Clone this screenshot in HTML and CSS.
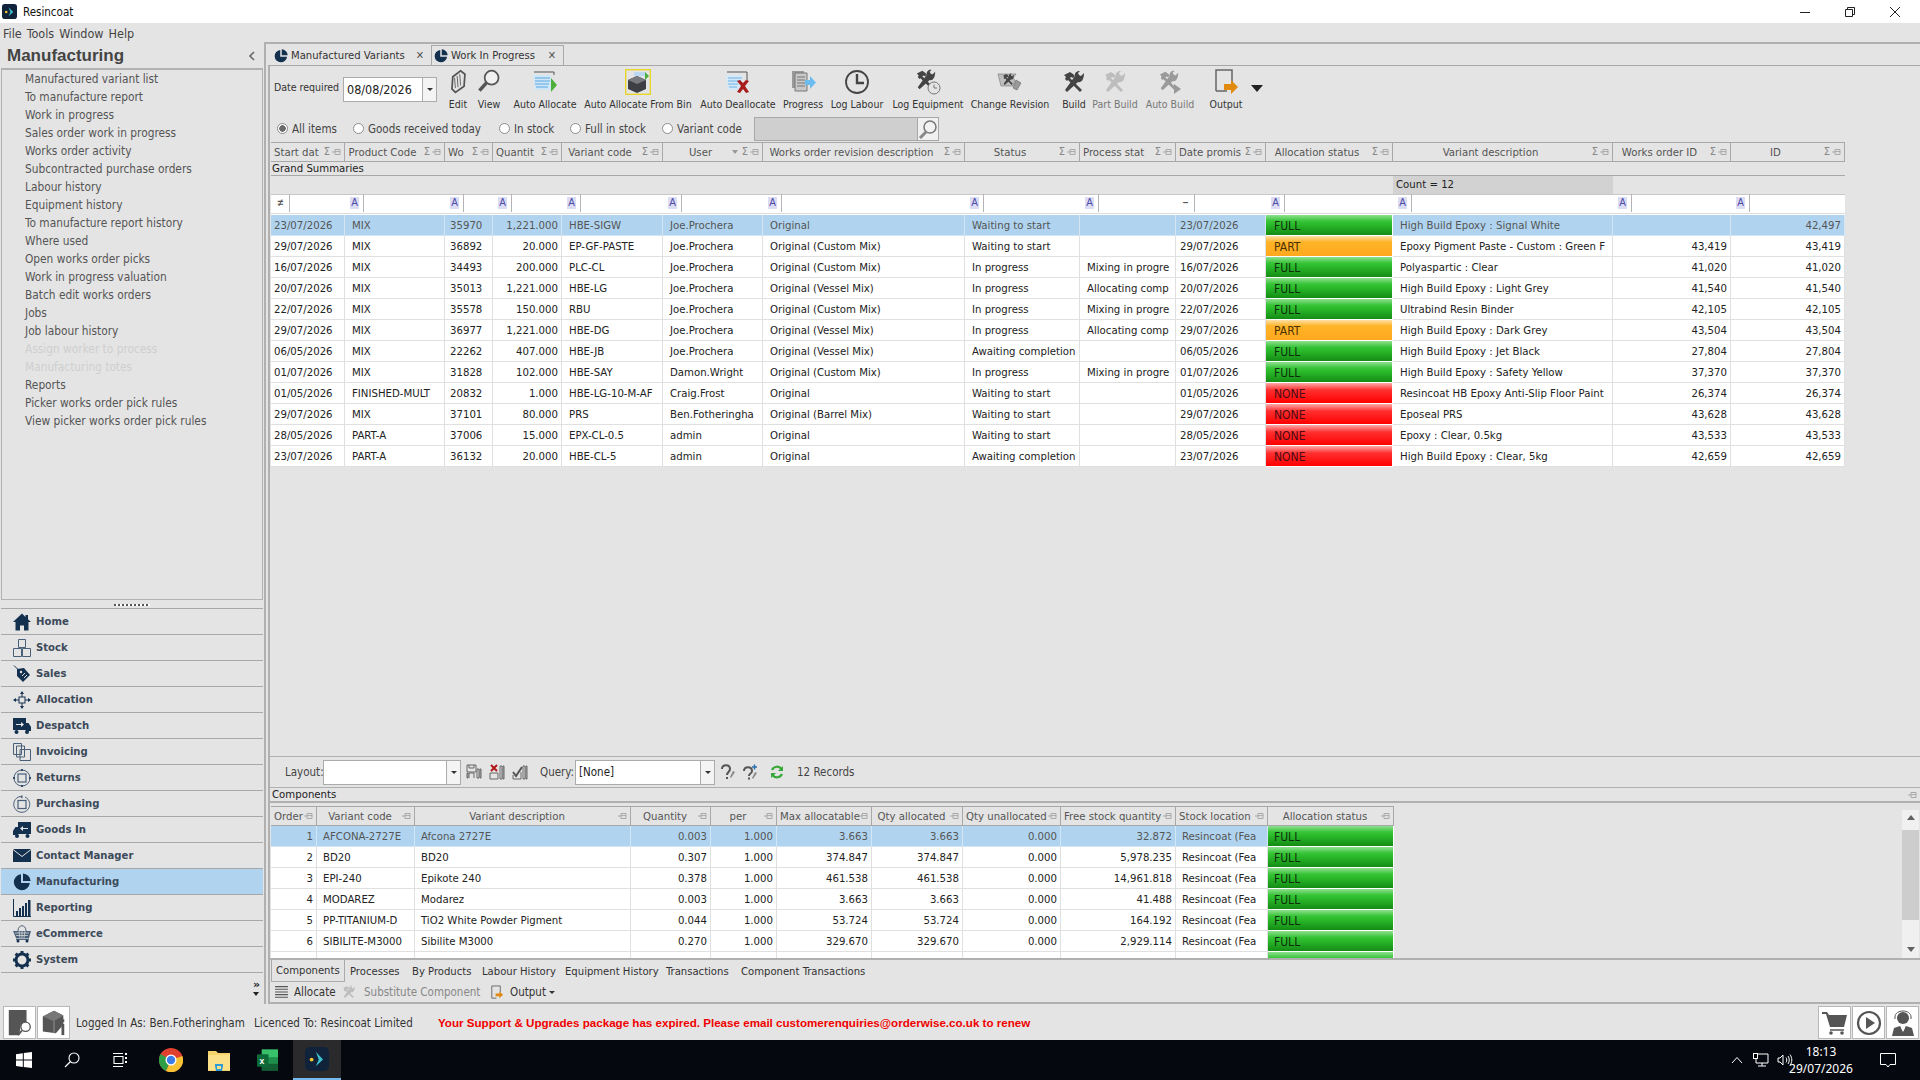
FILE: index.html
```html
<!DOCTYPE html>
<html lang="en">
<head>
<meta charset="utf-8">
<title>Resincoat</title>
<link rel="stylesheet" href="styles.css">
</head>
<body>
<svg class="defs" width="0" height="0" aria-hidden="true">
  <symbol id="pin" viewBox="0 0 10 8"><path d="M0 4h3M3 1.500h5v5H3zM3 3.600h5" fill="none" stroke="#a8a8a8" stroke-width="1"/></symbol>
  <symbol id="pie" viewBox="0 0 18 18"><path d="M8 1.200A8 8 0 1 0 16.800 10H8z" fill="#14304f"/><path d="M10 0.400A8 8 0 0 1 17.600 8H10z" fill="#14304f"/></symbol>
  <symbol id="hammers" viewBox="0 0 24 24"><path d="M2 5l6-3 3 2 2 2-2 2-2-1-1 1 12 12-2 2L6 10 5 11 3 9 4 7z" fill="currentColor"/><path d="M22 3l-3 3-2-1-1-2 2-2c-3-.5-6 2-5 5L3 20l2 2 11-10c3 1 6-2 6-9z" fill="currentColor"/></symbol>
</svg>

<header class="titlebar">
  <svg class="appicon" viewBox="0 0 16 16"><rect width="16" height="16" rx="3" fill="#10233a"/><circle cx="4.500" cy="8.500" r="1.400" fill="#f3c52c"/><path d="M7 3.500l5 5-5 4.500 2-4.500z" fill="#3fc1d0"/></svg>
  <span class="titletext">Resincoat</span>
  <div class="winctrls">
    <svg viewBox="0 0 12 12"><path d="M1 6.500h10" stroke="#222" fill="none"/></svg>
    <svg viewBox="0 0 12 12"><path d="M1.500 3.500h7v7h-7zM3.500 3.500v-2h7v7h-2" stroke="#222" fill="none"/></svg>
    <svg viewBox="0 0 12 12"><path d="M1 1l10 10M11 1L1 11" stroke="#222" fill="none"/></svg>
  </div>
</header>
<nav class="menubar"><span>File</span><span>Tools</span><span>Window</span><span>Help</span></nav>

<div class="workspace">
  <aside class="sidebar">
    <div class="sidehead"><h1>Manufacturing</h1><svg viewBox="0 0 8 10" class="collapse"><path d="M6 1L2 5l4 4" fill="none" stroke="#666" stroke-width="1.600"/></svg></div>
    <ul class="sidelist">
      <li>Manufactured variant list</li><li>To manufacture report</li><li>Work in progress</li><li>Sales order work in progress</li><li>Works order activity</li><li>Subcontracted purchase orders</li><li>Labour history</li><li>Equipment history</li><li>To manufacture report history</li><li>Where used</li><li>Open works order picks</li><li>Work in progress valuation</li><li>Batch edit works orders</li><li>Jobs</li><li>Job labour history</li><li class="off">Assign worker to process</li><li class="off">Manufacturing totes</li><li>Reports</li><li>Picker works order pick rules</li><li>View picker works order pick rules</li>
    </ul>
    <div class="grip"></div>
    <ul class="navlist">
      <li><svg viewBox="0 0 18 18"><path d="M9 .5L0 9h2.500v8.500h4.500v-5h4v5h4.500V9H18l-3-2.800V2h-2.500v2z" fill="#14304f"/></svg>Home</li>
      <li><svg viewBox="0 0 18 18"><path d="M5.500.5h7v8h-7zM.5 9.500h8v8h-8zM9.500 9.500h8v8h-8z" fill="#e4e4e4" stroke="#4a6078"/></svg>Stock</li>
      <li><svg viewBox="0 0 18 18"><path d="M1 .5l5 5" stroke="#14304f" fill="none"/><path d="M4 4l7-1 6 7-7 7-6-6z" fill="#14304f"/><circle cx="8" cy="7" r="1.200" fill="#e4e4e4"/><path d="M9 11l3-3M11 13l3-3" stroke="#e4e4e4" fill="none"/></svg>Sales</li>
      <li><svg viewBox="0 0 18 18"><path d="M9 0l2 3H7zM9 18l2-3H7zM0 9l3-2v4zM18 9l-3-2v4z" fill="#14304f"/><path d="M9 3v3M9 12v3M3 9h3M12 9h3" stroke="#14304f" fill="none"/><rect x="6" y="6" width="6" height="6" fill="#e4e4e4" stroke="#14304f"/></svg>Allocation</li>
      <li><svg viewBox="0 0 18 18"><path d="M0 1h13v12H0zM13 6h2.500l2.500 4v4h-5z" fill="#14304f"/><circle cx="3.500" cy="15" r="2" fill="#14304f"/><circle cx="14" cy="15" r="2" fill="#14304f"/><path d="M3 7h5V5l3 2.500L8 10V8H3z" fill="#e4e4e4"/></svg>Despatch</li>
      <li><svg viewBox="0 0 18 18"><path d="M.5.5h8v11h-8zM3.500 3h8v11h-8zM7 6.500h10.500v11H7z" fill="#e4e4e4" stroke="#4a6078"/></svg>Invoicing</li>
      <li><svg viewBox="0 0 18 18"><circle cx="9" cy="9" r="8" fill="none" stroke="#4a6078"/><rect x="5" y="5" width="8" height="8" fill="none" stroke="#4a6078" stroke-width="1.200"/><path d="M9 0v2M9 16v2M0 9h2M16 9h2" stroke="#14304f" stroke-width="1.500"/></svg>Returns</li>
      <li><svg viewBox="0 0 18 18"><path d="M7 1.500A8 8 0 1 0 12 2" fill="none" stroke="#4a6078"/><path d="M9.500 0v3.500L6.500 1.800z" fill="#4a6078"/><rect x="5" y="5.500" width="8" height="8" fill="none" stroke="#4a6078" stroke-width="1.200"/></svg>Purchasing</li>
      <li><svg viewBox="0 0 18 18"><path d="M5 1h13v12H5zM5 6H2.500L0 10v4h5z" fill="#14304f"/><circle cx="4" cy="15" r="2" fill="#14304f"/><circle cx="14.500" cy="15" r="2" fill="#14304f"/><path d="M15 7h-5V5L7 7.500 10 10V8h5z" fill="#e4e4e4"/></svg>Goods In</li>
      <li><svg viewBox="0 0 18 18"><path d="M0 2h18v13H0z" fill="#14304f"/><path d="M0 2.500l9 7 9-7" fill="none" stroke="#e4e4e4"/></svg>Contact Manager</li>
      <li class="current"><svg viewBox="0 0 18 18"><use href="#pie"/></svg>Manufacturing</li>
      <li><svg viewBox="0 0 18 18"><path d="M.5 0v17.500H18" fill="none" stroke="#14304f"/><path d="M3 12h2v5H3zM6 9h2v8H6zM9 7h2v10H9zM12 4h2v13h-2zM15 1h2.500v16H15z" fill="#14304f"/></svg>Reporting</li>
      <li><svg viewBox="0 0 18 18"><path d="M0 6h18l-2 7H3z" fill="#4a6078"/><path d="M2 8h14M3 10.500h12M6 6l1 7M9 6v7M12 6l-1 7" stroke="#e4e4e4" fill="none" stroke-width=".7"/><path d="M5 6c0-7 8-7 8 0" fill="none" stroke="#4a6078"/><circle cx="5" cy="16" r="1.500" fill="#14304f"/><circle cx="14" cy="16" r="1.500" fill="#14304f"/><path d="M3 14.200h13" stroke="#14304f"/></svg>eCommerce</li>
      <li><svg viewBox="0 0 18 18"><circle cx="9" cy="9" r="6" fill="none" stroke="#14304f" stroke-width="3"/><path d="M9 0v3M9 15v3M0 9h3M15 9h3M2.600 2.600l2.200 2.200M13.200 13.200l2.200 2.200M15.400 2.600l-2.200 2.200M4.800 13.200l-2.200 2.200" stroke="#14304f" stroke-width="3"/></svg>System</li>
    </ul>
    <div class="morenav"><span class="chev">»</span><span class="car"></span></div>
  </aside>

  <main class="main">
    <div class="tabs">
      <div class="tab"><svg viewBox="0 0 18 18"><use href="#pie"/></svg>Manufactured Variants<span class="x">✕</span></div>
      <div class="tab active"><svg viewBox="0 0 18 18"><use href="#pie"/></svg>Work In Progress<span class="x">✕</span></div>
    </div>
    <div class="pane">
      <div class="toolbar">
        <span class="datelabel">Date required</span>
        <div class="combo datecombo"><span>08/08/2026</span><i></i></div>
        <div class="tb w30"><svg viewBox="0 0 24 30"><path d="M9 27L5 23 6 9 15 2l5 4-1 14z" fill="#e4e4e4" stroke="#555" stroke-width="2"/><path d="M8 10l1 12M11 8l1 13M14 6l1 13" stroke="#555" fill="none"/></svg>Edit</div>
        <div class="tb w32"><svg viewBox="0 0 26 30"><circle cx="16" cy="10" r="8" fill="#f0f0f0" stroke="#555" stroke-width="2"/><path d="M10 16L2 25" stroke="#555" stroke-width="4"/></svg>View</div>
        <div class="tb w80"><svg viewBox="0 0 26 26"><path d="M2 3h20v3" fill="none" stroke="#555"/><path d="M1 6h18v15H3z" fill="#cfe6f7"/><path d="M3 9h15M3 12h15M3 15h14M4 18h12" stroke="#5aa7e0"/><path d="M19 9l6 7-6 7z" fill="#4caf3c"/></svg>Auto Allocate</div>
        <div class="tb w106"><svg viewBox="0 0 26 26"><rect x=".7" y=".7" width="24.600" height="24.600" fill="none" stroke="#e8d52c" stroke-width="1.400"/><path d="M9 3h12v4H9z" fill="#bcd8f0"/><path d="M3 11l9-4 9 4v9l-9 4-9-4z" fill="#3d3f44"/><path d="M3 11l9 4 9-4-9-4z" fill="#77797e"/><path d="M20 3l4 4-4 4z" fill="#4caf3c"/></svg>Auto Allocate From Bin</div>
        <div class="tb w94"><svg viewBox="0 0 26 26"><path d="M2 3h20v10" fill="none" stroke="#555"/><path d="M1 6h16v15H3z" fill="#d6e9f8"/><path d="M3 9h14M3 12h13M3 15h10M4 18h8" stroke="#6cb0e4"/><path d="M12 12l3-1 3 3 3-3 3 1-4 5 4 6-3 1-3-4-3 4-3-1 4-6z" fill="#a81c1c"/></svg>Auto Deallocate</div>
        <div class="tb w36"><svg viewBox="0 0 26 26"><path d="M2 2h12v17H2z" fill="#9a9a9a"/><path d="M5 4h12v18H5z" fill="#c8c8c8" stroke="#777"/><path d="M7 8h8M7 11h8M7 14h8M7 17h8" stroke="#777"/><path d="M15 11h5V7l6 6.500-6 6.500v-4h-5z" fill="#6dbcf0"/></svg>Progress</div>
        <div class="tb w72"><svg viewBox="0 0 26 26"><circle cx="13" cy="13" r="11" fill="none" stroke="#444" stroke-width="1.800"/><path d="M13 5v9h7" fill="none" stroke="#444" stroke-width="2.400"/></svg>Log Labour</div>
        <div class="tb w70"><svg viewBox="0 0 26 26"><use href="#hammers" width="22" height="22" class="ham"/><circle cx="19" cy="19" r="6" fill="#e4e4e4" stroke="#777"/><path d="M19 15.500V19h3" fill="none" stroke="#777"/></svg>Log Equipment</div>
        <div class="tb w94"><svg viewBox="0 0 26 26"><path d="M1 5h18l-3 4 2 2-2 6H4z" fill="#bdbdbd" stroke="#777" stroke-width=".6"/><use href="#hammers" x="5" y="4" width="13" height="13" class="ham"/><path d="M19 11l5 3-4 7-4-2z" fill="#999" stroke="#666" stroke-width=".6"/></svg>Change Revision</div>
        <div class="tb w34"><svg viewBox="0 0 26 26"><use href="#hammers" x="1" y="1" width="24" height="24" class="ham"/></svg>Build</div>
        <div class="tb w48 dim"><svg viewBox="0 0 26 26"><use href="#hammers" x="1" y="1" width="24" height="24" class="ham2"/></svg>Part Build</div>
        <div class="tb w62 dim"><svg viewBox="0 0 26 26"><use href="#hammers" x="1" y="1" width="22" height="22" class="ham3"/><path d="M17 15l7 5-7 5z" fill="#999"/></svg>Auto Build</div>
        <div class="tb w50"><svg viewBox="0 0 26 26"><path d="M3 22V1h16v13M3 22h11" fill="none" stroke="#666" stroke-width="1.500"/><path d="M11 15h7v-4l7 7-7 7v-4h-7z" fill="#e08a10"/></svg>Output</div>
        <span class="bigcaret"></span>
      </div>
      <div class="radios">
        <label class="rb r76 on"><i></i>All items</label>
        <label class="rb r146"><i></i>Goods received today</label>
        <label class="rb r71"><i></i>In stock</label>
        <label class="rb r92"><i></i>Full in stock</label>
        <label class="rb r87"><i></i>Variant code</label>
        <div class="search"><span></span><b><svg viewBox="0 0 20 20"><circle cx="12" cy="8" r="6" fill="#f2f2f2" stroke="#777" stroke-width="1.500"/><path d="M8 13l-6 6" stroke="#888" stroke-width="3"/></svg></b></div>
      </div>

      <section class="gridzone">
        <div class="grid wip">
          <div class="hdr">
            <div class="left">Start dat<s>Σ</s><svg><use href="#pin"/></svg></div><div>Product Code<s>Σ</s><svg><use href="#pin"/></svg></div><div class="left">Wo<s>Σ</s><svg><use href="#pin"/></svg></div><div class="left">Quantit<s>Σ</s><svg><use href="#pin"/></svg></div><div>Variant code<s>Σ</s><svg><use href="#pin"/></svg></div><div>User<em></em><s>Σ</s><svg><use href="#pin"/></svg></div><div>Works order revision description<s>Σ</s><svg><use href="#pin"/></svg></div><div>Status<s>Σ</s><svg><use href="#pin"/></svg></div><div class="left">Process stat<s>Σ</s><svg><use href="#pin"/></svg></div><div class="left">Date promis<s>Σ</s><svg><use href="#pin"/></svg></div><div>Allocation status<s>Σ</s><svg><use href="#pin"/></svg></div><div>Variant description<s>Σ</s><svg><use href="#pin"/></svg></div><div>Works order ID<s>Σ</s><svg><use href="#pin"/></svg></div><div>ID<s>Σ</s><svg><use href="#pin"/></svg></div>
          </div>
          <div class="grand">Grand Summaries</div>
          <div class="summ"><div class="sp11"></div><div class="count">Count = 12</div><div class="sp2"></div></div>
          <div class="filter">
            <div><b class="neq">≠</b></div><div><b>A</b></div><div><b>A</b></div><div><b>A</b></div><div><b>A</b></div><div><b>A</b></div><div><b>A</b></div><div><b>A</b></div><div><b>A</b></div><div><b class="eq">–</b></div><div><b>A</b></div><div><b>A</b></div><div><b>A</b></div><div><b>A</b></div>
          </div>
          <div class="row sel"><div>23/07/2026</div><div>MIX</div><div class="pl">35970</div><div class="r">1,221.000</div><div>HBE-SIGW</div><div>Joe.Prochera</div><div>Original</div><div>Waiting to start</div><div></div><div>23/07/2026</div><div class="full">FULL</div><div>High Build Epoxy : Signal White</div><div class="r"></div><div class="r">42,497</div></div>
          <div class="row"><div>29/07/2026</div><div>MIX</div><div class="pl">36892</div><div class="r">20.000</div><div>EP-GF-PASTE</div><div>Joe.Prochera</div><div>Original (Custom Mix)</div><div>Waiting to start</div><div></div><div>29/07/2026</div><div class="part">PART</div><div>Epoxy Pigment Paste - Custom : Green F</div><div class="r">43,419</div><div class="r">43,419</div></div>
          <div class="row"><div>16/07/2026</div><div>MIX</div><div class="pl">34493</div><div class="r">200.000</div><div>PLC-CL</div><div>Joe.Prochera</div><div>Original (Custom Mix)</div><div>In progress</div><div>Mixing in progre</div><div>16/07/2026</div><div class="full">FULL</div><div>Polyaspartic : Clear</div><div class="r">41,020</div><div class="r">41,020</div></div>
          <div class="row"><div>20/07/2026</div><div>MIX</div><div class="pl">35013</div><div class="r">1,221.000</div><div>HBE-LG</div><div>Joe.Prochera</div><div>Original (Vessel Mix)</div><div>In progress</div><div>Allocating comp</div><div>20/07/2026</div><div class="full">FULL</div><div>High Build Epoxy : Light Grey</div><div class="r">41,540</div><div class="r">41,540</div></div>
          <div class="row"><div>22/07/2026</div><div>MIX</div><div class="pl">35578</div><div class="r">150.000</div><div>RBU</div><div>Joe.Prochera</div><div>Original (Custom Mix)</div><div>In progress</div><div>Mixing in progre</div><div>22/07/2026</div><div class="full">FULL</div><div>Ultrabind Resin Binder</div><div class="r">42,105</div><div class="r">42,105</div></div>
          <div class="row"><div>29/07/2026</div><div>MIX</div><div class="pl">36977</div><div class="r">1,221.000</div><div>HBE-DG</div><div>Joe.Prochera</div><div>Original (Vessel Mix)</div><div>In progress</div><div>Allocating comp</div><div>29/07/2026</div><div class="part">PART</div><div>High Build Epoxy : Dark Grey</div><div class="r">43,504</div><div class="r">43,504</div></div>
          <div class="row"><div>06/05/2026</div><div>MIX</div><div class="pl">22262</div><div class="r">407.000</div><div>HBE-JB</div><div>Joe.Prochera</div><div>Original (Vessel Mix)</div><div>Awaiting completion</div><div></div><div>06/05/2026</div><div class="full">FULL</div><div>High Build Epoxy : Jet Black</div><div class="r">27,804</div><div class="r">27,804</div></div>
          <div class="row"><div>01/07/2026</div><div>MIX</div><div class="pl">31828</div><div class="r">102.000</div><div>HBE-SAY</div><div>Damon.Wright</div><div>Original (Custom Mix)</div><div>In progress</div><div>Mixing in progre</div><div>01/07/2026</div><div class="full">FULL</div><div>High Build Epoxy : Safety Yellow</div><div class="r">37,370</div><div class="r">37,370</div></div>
          <div class="row"><div>01/05/2026</div><div>FINISHED-MULT</div><div class="pl">20832</div><div class="r">1.000</div><div>HBE-LG-10-M-AF</div><div>Craig.Frost</div><div>Original</div><div>Waiting to start</div><div></div><div>01/05/2026</div><div class="none">NONE</div><div>Resincoat HB Epoxy Anti-Slip Floor Paint</div><div class="r">26,374</div><div class="r">26,374</div></div>
          <div class="row"><div>29/07/2026</div><div>MIX</div><div class="pl">37101</div><div class="r">80.000</div><div>PRS</div><div>Ben.Fotheringha</div><div>Original (Barrel Mix)</div><div>Waiting to start</div><div></div><div>29/07/2026</div><div class="none">NONE</div><div>Eposeal PRS</div><div class="r">43,628</div><div class="r">43,628</div></div>
          <div class="row"><div>28/05/2026</div><div>PART-A</div><div class="pl">37006</div><div class="r">15.000</div><div>EPX-CL-0.5</div><div>admin</div><div>Original</div><div>Waiting to start</div><div></div><div>28/05/2026</div><div class="none">NONE</div><div>Epoxy : Clear, 0.5kg</div><div class="r">43,533</div><div class="r">43,533</div></div>
          <div class="row"><div>23/07/2026</div><div>PART-A</div><div class="pl">36132</div><div class="r">20.000</div><div>HBE-CL-5</div><div>admin</div><div>Original</div><div>Awaiting completion</div><div></div><div>23/07/2026</div><div class="none">NONE</div><div>High Build Epoxy : Clear, 5kg</div><div class="r">42,659</div><div class="r">42,659</div></div>
        </div>
      </section>

      <div class="layoutbar">
        <span class="lay-l">Layout:</span>
        <div class="combo laycombo"><span></span><i></i></div>
        <div class="mini">
          <svg viewBox="0 0 16 16"><path d="M1 1h9v7H1zM3 1v3h5V1M3 14V9h5v5M11 5h2v9h-2zM14 5h1v9h-1zM1 9h1v5H1z" fill="none" stroke="#666"/></svg>
          <svg viewBox="0 0 16 16"><path d="M2 1l6 6M8 1L2 7" stroke="#b01818" stroke-width="2"/><path d="M1 9h8v6H1zM11 2h2v13h-2zM14 2h1v13h-1z" fill="none" stroke="#666"/></svg>
          <svg viewBox="0 0 16 16"><path d="M1 8l3 4 6-9" fill="none" stroke="#555" stroke-width="2"/><path d="M1 11v4h8V8M11 2h2v13h-2zM14 2h1v13h-1z" fill="none" stroke="#666"/></svg>
        </div>
        <span class="lay-q">Query:</span>
        <div class="combo qcombo"><span>[None]</span><i></i></div>
        <div class="mini q2">
          <svg viewBox="0 0 16 16"><path d="M2 5c0-5 8-5 8 0 0 3-3 3-3 6" fill="none" stroke="#555" stroke-width="2"/><rect x="6" y="13" width="2" height="2" fill="#555"/><path d="M11 14l4-6-2-1-3 6z" fill="#888"/></svg>
          <svg viewBox="0 0 16 16"><path d="M2 7c0-5 8-5 8 0 0 3-3 2-3 5" fill="none" stroke="#555" stroke-width="2"/><rect x="6" y="13.500" width="2" height="2" fill="#555"/><path d="M11 15l4-6-2-1-3 6z" fill="#888"/><path d="M10 3h5M12.500 .5v5" stroke="#2a6fb0" stroke-width="1.500"/></svg>
        </div>
        <svg class="refresh" viewBox="0 0 14 14"><path d="M2 5a5.500 5.500 0 0 1 9.500-1M12 9a5.500 5.500 0 0 1-9.500 1" fill="none" stroke="#37a83a" stroke-width="2.200"/><path d="M13 1v5H8zM1 13V8h5z" fill="#37a83a"/></svg>
        <span class="records">12 Records</span>
      </div>

      <div class="comphead"><span>Components</span><svg><use href="#pin"/></svg></div>
      <div class="compwrap">
        <div class="grid comp">
          <div class="hdr">
            <div class="left">Order<svg><use href="#pin"/></svg></div><div>Variant code<svg><use href="#pin"/></svg></div><div>Variant description<svg><use href="#pin"/></svg></div><div>Quantity<svg><use href="#pin"/></svg></div><div>per<svg><use href="#pin"/></svg></div><div class="left">Max allocatable<svg><use href="#pin"/></svg></div><div>Qty allocated<svg><use href="#pin"/></svg></div><div class="left">Qty unallocated<svg><use href="#pin"/></svg></div><div class="left">Free stock quantity<svg><use href="#pin"/></svg></div><div class="left">Stock location<svg><use href="#pin"/></svg></div><div>Allocation status<svg><use href="#pin"/></svg></div>
          </div>
          <div class="row sel"><div class="r">1</div><div>AFCONA-2727E</div><div>Afcona 2727E</div><div class="r">0.003</div><div class="r">1.000</div><div class="r">3.663</div><div class="r">3.663</div><div class="r">0.000</div><div class="r">32.872</div><div>Resincoat (Fea</div><div class="full">FULL</div></div>
          <div class="row"><div class="r">2</div><div>BD20</div><div>BD20</div><div class="r">0.307</div><div class="r">1.000</div><div class="r">374.847</div><div class="r">374.847</div><div class="r">0.000</div><div class="r">5,978.235</div><div>Resincoat (Fea</div><div class="full">FULL</div></div>
          <div class="row"><div class="r">3</div><div>EPI-240</div><div>Epikote 240</div><div class="r">0.378</div><div class="r">1.000</div><div class="r">461.538</div><div class="r">461.538</div><div class="r">0.000</div><div class="r">14,961.818</div><div>Resincoat (Fea</div><div class="full">FULL</div></div>
          <div class="row"><div class="r">4</div><div>MODAREZ</div><div>Modarez</div><div class="r">0.003</div><div class="r">1.000</div><div class="r">3.663</div><div class="r">3.663</div><div class="r">0.000</div><div class="r">41.488</div><div>Resincoat (Fea</div><div class="full">FULL</div></div>
          <div class="row"><div class="r">5</div><div>PP-TITANIUM-D</div><div>TiO2 White Powder Pigment</div><div class="r">0.044</div><div class="r">1.000</div><div class="r">53.724</div><div class="r">53.724</div><div class="r">0.000</div><div class="r">164.192</div><div>Resincoat (Fea</div><div class="full">FULL</div></div>
          <div class="row"><div class="r">6</div><div>SIBILITE-M3000</div><div>Sibilite M3000</div><div class="r">0.270</div><div class="r">1.000</div><div class="r">329.670</div><div class="r">329.670</div><div class="r">0.000</div><div class="r">2,929.114</div><div>Resincoat (Fea</div><div class="full">FULL</div></div>
          <div class="row"><div></div><div></div><div></div><div></div><div></div><div></div><div></div><div></div><div></div><div></div><div class="full"></div></div>
        </div>
        <div class="vscroll"><span class="up"></span><span class="track"><i></i></span><span class="dn"></span></div>
      </div>
      <div class="subtabs"><span class="active">Components</span><span>Processes</span><span>By Products</span><span>Labour History</span><span>Equipment History</span><span>Transactions</span><span>Component Transactions</span></div>
      <div class="subtools">
        <svg viewBox="0 0 14 14"><path d="M1 1.500h12M1 4h12M1 6.500h12M1 9h12M1 11.500h12" stroke="#555"/></svg><span class="t1">Allocate</span>
        <svg viewBox="0 0 16 16"><use href="#hammers" width="15" height="15" class="ham2"/></svg><span class="t2 dimtext">Substitute Component</span>
        <svg viewBox="0 0 14 16"><path d="M2 14V1h9v7M2 14h5" fill="none" stroke="#666"/><path d="M6 9h4V7l4 3.500L10 14v-2H6z" fill="#e08a10"/></svg><span class="t3">Output</span><span class="tinycaret"></span>
      </div>
    </div>
  </main>
</div>

<footer class="status">
  <div class="statbtn"><svg viewBox="0 0 26 30"><path d="M1 1h19v13l-6 3-2 11H1z" fill="#555"/><circle cx="19" cy="19" r="5" fill="#fff" stroke="#555" stroke-width="1.400"/><path d="M15 23l-4 5" stroke="#555" stroke-width="2"/></svg></div>
  <div class="statbtn"><svg viewBox="0 0 26 30"><path d="M1 8l12-6 10 5v10l-8 9-14-2z" fill="#555"/><path d="M1 8l12 5 10-6-10-5z" fill="#777"/><path d="M13 13v13" stroke="#999"/><path d="M21 16h3v12h-3z" fill="#555"/><rect x="21" y="11" width="3" height="3" fill="#555"/></svg></div>
  <span class="who">Logged In As: Ben.Fotheringham</span><span class="lic">Licenced To: Resincoat Limited</span>
  <strong class="warn">Your Support &amp; Upgrades package has expired. Please email customerenquiries@orderwise.co.uk to renew</strong>
  <div class="statright">
    <div class="statbtn"><svg viewBox="0 0 26 26"><path d="M0 2h5l2 3h18l-3 12H8L4 4H0z" fill="#555"/><path d="M8 20h14" stroke="#555" stroke-width="1.500"/><circle cx="9" cy="23" r="1.800" fill="#555"/><circle cx="20" cy="23" r="1.800" fill="#555"/></svg></div>
    <div class="statbtn"><svg viewBox="0 0 26 26"><circle cx="13" cy="13" r="11" fill="none" stroke="#555" stroke-width="2.200"/><path d="M10 7l9 6-9 6z" fill="#555"/></svg></div>
    <div class="statbtn"><svg viewBox="0 0 26 26"><circle cx="13" cy="8" r="6" fill="#555"/><path d="M5 9V7c0-8 16-8 16 0v2" fill="none" stroke="#555"/><path d="M2 26l2-8 6-2 3 5 3-5 6 2 2 8z" fill="#555"/><path d="M11 18l2 4 2-4z" fill="#fff"/></svg></div>
  </div>
</footer>

<div class="taskbar">
  <svg class="win" viewBox="0 0 16 16"><path d="M0 2.200L6.800 1.200v6.400H0zM7.800 1L16 0v7.600H7.800zM0 8.500h6.800v6.400L0 14zM7.800 8.500H16V16L7.800 15z" fill="#fff"/></svg>
  <svg class="srch" viewBox="0 0 16 16"><circle cx="10" cy="6" r="5" fill="none" stroke="#fff" stroke-width="1.100"/><path d="M6.500 9.500L1 15" stroke="#fff" stroke-width="1.300"/></svg>
  <svg class="tv" viewBox="0 0 16 16"><path d="M2 4.500h9v7H2zM1 1.500h10M1 14.500h10" fill="none" stroke="#fff" stroke-width="1.100"/><path d="M13 1h2v2h-2zM13 5h2v2h-2zM13 9h2v2h-2" fill="#fff"/></svg>
  <svg class="chrome" viewBox="0 0 24 24"><circle cx="12" cy="12" r="12" fill="#e0402f"/><path d="M12 12L1.600 6A12 12 0 0 0 7 23z" fill="#2f9e46"/><path d="M12 12l11.300-4A12 12 0 0 1 7 23z" fill="#f6c233"/><circle cx="12" cy="12" r="5.500" fill="#fff"/><circle cx="12" cy="12" r="4.200" fill="#3b7de8"/></svg>
  <svg class="folder" viewBox="0 0 22 22"><path d="M0 2h8l2 2h12v18H0z" fill="#f3d36a"/><path d="M0 6h22v15H0z" fill="#fbe08a"/><path d="M7 15h8v2l-1 5H8l-1-5z" fill="#2f9bd6"/><path d="M9 17h4v3H9z" fill="#fbe08a"/></svg>
  <svg class="excel" viewBox="0 0 22 24"><path d="M5 1h17v22H5z" fill="#1f8f4e"/><path d="M5 1h17v8H5z" fill="#39c06a"/><path d="M5 16h17v7H5z" fill="#115f33"/><rect y="6" width="12" height="13" rx="1" fill="#0d6a39"/><text x="2.500" y="16" class="xtxt">x</text></svg>
  <div class="tb-active"><svg viewBox="0 0 20 20"><rect width="20" height="20" rx="4" fill="#10233a"/><circle cx="5.500" cy="10.500" r="1.600" fill="#f3c52c"/><path d="M9 4l6 6.500-6 5.500 2.500-5.500z" fill="#3fc1d0"/></svg></div>
  <div class="tray">
    <svg class="t-up" viewBox="0 0 12 8"><path d="M1 7l5-5.500L11 7" fill="none" stroke="#fff"/></svg>
    <svg class="t-net" viewBox="0 0 16 14"><path d="M3 1h12v9H3zM9 10v3M5 13h8" fill="none" stroke="#fff"/><rect x=".5" y=".5" width="4" height="5" fill="#000" stroke="#fff"/></svg>
    <svg class="t-snd" viewBox="0 0 16 14"><path d="M1 5h2l3-3v10L3 9H1z" fill="none" stroke="#fff"/><path d="M9 4.500c1 1.500 1 3.500 0 5M11 3c1.700 2.500 1.700 5.500 0 8M13 1.500c2.400 3.500 2.400 7.500 0 11" fill="none" stroke="#fff"/></svg>
    <div class="clock"><span>18:13</span><span>29/07/2026</span></div>
    <svg class="t-note" viewBox="0 0 16 16"><path d="M.5 1.500h15v11H10l-2 2.500-2-2.500H.5z" fill="none" stroke="#fff"/></svg>
  </div>
</div>
</body>
</html>
```
FILE: styles.css
```css
* { box-sizing: border-box; }
html, body { margin: 0; padding: 0; }
body {
  width: 1920px; height: 1080px; overflow: hidden;
  display: flex; flex-direction: column;
  background: #e4e4e4; color: #1e1e1e;
  font-family: "DejaVu Sans Condensed", "DejaVu Sans", sans-serif;
  font-stretch: condensed;
  font-size: 11.5px; line-height: 14px;
}
.defs { position: absolute; }
ul { list-style: none; margin: 0; padding: 0; }

.titlebar { height: 23px; background: #fff; display: flex; align-items: center; padding-left: 2px; flex: none; }
.appicon { width: 15px; height: 15px; }
.titletext { margin-left: 6px; color: #111; }
.winctrls { margin-left: auto; display: flex; gap: 33px; padding-right: 19px; }
.winctrls svg { width: 12px; height: 12px; }

.menubar { height: 19px; flex: none; display: flex; gap: 5px; padding: 2px 0 0 3px; align-items: center; color: #444; font-size: 12.5px; }

.workspace { display: flex; height: 963px; flex: none; }
.sidebar { width: 264px; flex: none; display: flex; flex-direction: column; padding-left: 1px; }
.sidehead { height: 26px; display: flex; align-items: center; padding: 2px 8px 0 6px; justify-content: space-between; }
.sidehead h1 { margin: 0; font: bold 17px/20px "Liberation Sans", sans-serif; color: #444; }
.collapse { width: 8px; height: 10px; }
.sidelist { width: 262px; height: 532px; border: 2px solid #b2b2b2; border-width: 2px 1px 1px 1px; padding: 0 0 0 23px; color: #555; font-size: 11.8px; }
.sidelist li { height: 18px; line-height: 18px; white-space: nowrap; }
.sidelist .off { color: #cfcfcf; }
.grip { height: 8px; width: 262px; position: relative; }
.grip::after { content: ""; display: block; width: 36px; height: 2px; margin: 4px auto 0; background: repeating-linear-gradient(90deg, #555 0 2px, #fff 2px 4px); }
.navlist { width: 262px; border-top: 1px solid #a8a8a8; }
.navlist li { height: 26px; border-bottom: 1px solid #a8a8a8; display: flex; align-items: center; padding-left: 12px; gap: 5px; font: bold 10.1px/14px "DejaVu Sans", sans-serif; color: #3c4a5a; }
.navlist li.current { background: #b0d4ef; }
.navlist svg { width: 18px; height: 18px; flex: none; }
.morenav { width: 262px; display: flex; flex-direction: column; align-items: flex-end; padding: 8px 3px 0 0; }
.chev { font: bold 11px/8px "DejaVu Sans", sans-serif; color: #222; }
.car { width: 0; height: 0; border: 3px solid transparent; border-top: 4px solid #222; margin: 3px 1px 0 0; }

.main { width: 1656px; height: 962px; border-top: 2px solid #b0b0b0; border-left: 2px solid #b0b0b0; padding-left: 2px; display: flex; flex-direction: column; }
.tabs { height: 21px; flex: none; display: flex; padding: 1px 0 0 4px; align-items: stretch; font-size: 11.2px; }
.tab { display: flex; align-items: center; width: 159px; color: #333; padding: 1px 0 0 2px; }
.tab svg { width: 14px; height: 14px; margin-right: 3px; flex: none; }
.tab .x { margin-left: auto; margin-right: 7px; font-size: 11px; font-weight: bold; color: #555; }
.tab.active { width: 133px; background: #e4e4e4; border: 1px solid #aaa; border-bottom: 0; padding-top: 0; }

.pane { flex: 1; border-top: 1px solid #a8a8a8; border-left: 2px solid #b0b0b0; border-bottom: 2px solid #b0b0b0; display: flex; flex-direction: column; min-height: 0; }

.toolbar { height: 49px; flex: none; display: flex; align-items: flex-start; padding-left: 4px; font-size: 10.5px; }
.datelabel { margin-top: 14px; width: 69px; flex: none; color: #333; white-space: nowrap; font-size: 10.5px; }
.combo { display: flex; background: #fff; border: 1px solid #ababab; flex: none; }
.combo span { flex: 1; padding-left: 3px; font-size: 12.5px; line-height: 23px; color: #222; }
.combo i { width: 14px; border-left: 1px solid #ababab; background: #f4f4f4; position: relative; }
.combo i::after { content: ""; position: absolute; left: 4px; top: 10px; border: 3px solid transparent; border-top: 3px solid #333; }
.datecombo { width: 94px; height: 25px; margin-top: 11px; margin-right: 6px; }
.tb { flex: none; display: flex; flex-direction: column; align-items: center; color: #333; padding-top: 3px; white-space: nowrap; }
.tb svg { width: 26px; height: 26px; margin-bottom: 2px; }
.tb.dim { color: #777; }
.w30 { width: 30px; } .w32 { width: 32px; } .w80 { width: 80px; } .w106 { width: 106px; } .w94 { width: 94px; }
.w36 { width: 36px; } .w72 { width: 72px; } .w70 { width: 70px; } .w34 { width: 34px; } .w48 { width: 48px; } .w62 { width: 62px; } .w50 { width: 50px; }
.ham { color: #444; } .ham2 { color: #bdbdbd; } .ham3 { color: #9a9a9a; }
.bigcaret { width: 0; height: 0; border: 6px solid transparent; border-top: 7px solid #222; margin-top: 19px; }

.radios { height: 27px; flex: none; display: flex; align-items: center; padding-left: 7px; color: #444; }
.rb { display: flex; align-items: center; gap: 3px; flex: none; }
.rb i { width: 11px; height: 11px; border-radius: 50%; border: 1px solid #8e8e8e; background: #fff; margin-right: 1px; flex: none; }
.rb.on i { background: radial-gradient(circle, #6a6a6a 0 3px, #fff 3.500px); }
.r76 { width: 76px; } .r146 { width: 146px; } .r71 { width: 71px; } .r92 { width: 92px; } .r87 { width: 92px; }
.search { width: 185px; height: 24px; display: flex; border: 1px solid #a8a8a8; background: #cfcfcf; }
.search span { flex: 1; }
.search b { width: 21px; background: #f0f0f0; border-left: 1px solid #a8a8a8; display: flex; align-items: center; justify-content: center; }
.search svg { width: 20px; height: 20px; }

.gridzone { flex: 1; min-height: 0; padding-left: 1px; }
.grid { color: #222; font-size: 11.3px; }
.wip { width: 1574px; }
.wip .hdr, .wip .row, .wip .filter { display: grid; grid-template-columns: 74px 100px 48px 69px 101px 100px 202px 115px 96px 90px 127px 220px 118px 114px; }
.comp { width: 1123px; }
.comp .hdr, .comp .row { display: grid; grid-template-columns: 46px 98px 216px 80px 66px 95px 91px 98px 115px 92px 126px; }

.hdr { height: 20px; border-top: 1px solid #a8a8a8; border-bottom: 1px solid #a8a8a8; color: #555; }
.hdr > div { display: flex; align-items: center; justify-content: center; position: relative; border-right: 1px solid #a8a8a8; padding: 1px 27px 0 3px; white-space: nowrap; overflow: hidden; }
.hdr > div.left { justify-content: flex-start; }
.hdr s { text-decoration: none; position: absolute; right: 14px; top: 2px; color: #888; font-size: 11px; }
.hdr svg { position: absolute; right: 2px; top: 5px; width: 10px; height: 8px; }
.hdr em { position: absolute; right: 24px; top: 7px; border: 3px solid transparent; border-top: 4px solid #999; }
.comp .hdr > div { padding-right: 14px; }

.grand { height: 14px; line-height: 14px; border-bottom: 1px solid #a8a8a8; padding-left: 1px; color: #222; }
.summ { height: 18px; display: grid; grid-template-columns: 1122px 220px 232px; }
.summ > div { border-bottom: 1px solid #c8c8c8; }
.count { background: #d2d2d2; padding-left: 3px; line-height: 18px; color: #222; }
.filter { height: 21px; background: #fff; }
.filter > div { height: 20px; position: relative; padding: 3px 0 0 5px; border-bottom: 1px solid #dcdcdc; }
.filter > div::after { content: ""; position: absolute; left: 18px; top: 0; bottom: 1px; width: 1px; background: #b5b5b5; }
.filter b { display: block; width: 9px; height: 12px; background: #dcdcf2; color: #4c4ca8; font: 10px/12px "Liberation Sans", sans-serif; text-align: center; }
.filter b.neq, .filter b.eq { background: none; color: #555; font-weight: bold; }

.row { height: 21px; background: #fff; }
.row > div { height: 21px; line-height: 22px; padding: 0 3px 0 7px; border-right: 1px solid #e0e0e0; border-bottom: 1px solid #e0e0e0; white-space: nowrap; overflow: hidden; }
.wip .row > div:nth-child(1) { padding-left: 3px; }
.wip .row > div:nth-child(10) { padding-left: 4px; }
.row > div.r { text-align: right; }
.row > div.pl { padding-left: 5px; }
.row.sel { background: #b0d4ef; color: #555; }
.row.sel > div { border-color: #d4e6f4; }
.row > div.full, .row > div.part, .row > div.none { font-size: 12px; border-color: #fff; padding-left: 8px; }
.row > div.full { background: linear-gradient(#8fe08f 0, #38c438 30%, #2cbc2c 45%, #148c14 100%); color: #0d2d0d; }
.row > div.part { background: linear-gradient(#ffdfa5 0, #ffb428 30%, #ffa81e 100%); color: #4a3000; }
.row > div.none { background: linear-gradient(#ffa8a8 0, #ff3030 35%, #ff0000 100%); color: #4a0a14; }

.layoutbar { height: 31px; flex: none; border-top: 1px solid #b0b0b0; display: flex; align-items: center; padding-left: 15px; color: #444; }
.lay-l { width: 38px; flex: none; }
.laycombo { width: 138px; height: 25px; }
.mini { display: flex; gap: 7px; margin-left: 5px; width: 74px; flex: none; }
.mini svg { width: 16px; height: 16px; flex: none; }
.lay-q { width: 35px; flex: none; }
.qcombo { width: 140px; height: 25px; }
.qcombo span { font-size: 11.5px; }
.mini.q2 { width: 50px; margin-left: 5px; gap: 6px; }
.refresh { width: 14px; height: 14px; flex: none; }
.records { margin-left: 13px; }

.comphead { height: 16px; flex: none; border-top: 1px solid #b0b0b0; border-bottom: 2px solid #b0b0b0; display: flex; align-items: center; justify-content: space-between; padding: 0 2px; color: #222; font-size: 11.3px; }
.comphead svg { width: 10px; height: 8px; }
.compwrap { height: 154px; flex: none; display: flex; margin-top: 3px; padding-left: 1px; overflow: hidden; border-bottom: 2px solid #b0b0b0; }
.comp .hdr { height: 20px; }
.comp .row > div { padding-left: 6px; }
.vscroll { margin-left: auto; width: 17px; margin-right: 1px; margin-top: 4px; background: #f0f0f0; display: flex; flex-direction: column; height: 148px; }
.vscroll .up, .vscroll .dn { height: 17px; position: relative; flex: none; background: #f0f0f0; }
.vscroll .up::after { content: ""; position: absolute; left: 5px; top: 5px; border: 4px solid transparent; border-bottom: 5px solid #606060; border-top: 0; }
.vscroll .dn::after { content: ""; position: absolute; left: 5px; top: 6px; border: 4px solid transparent; border-top: 5px solid #606060; border-bottom: 0; }
.vscroll .track { flex: 1; }
.vscroll .track i { display: block; height: 90px; margin-top: 3px; background: #cdcdcd; }

.subtabs { height: 22px; flex: none; display: grid; grid-template-columns: 79px 62px 70px 83px 101px 75px auto; align-items: center; padding-left: 1px; color: #333; font-size: 11.2px; }
.subtabs span { line-height: 21px; white-space: nowrap; }
.subtabs .active { border: 1px solid #aaa; border-top: 0; width: 74px; padding-left: 4px; }
.subtools { height: 20px; flex: none; display: flex; align-items: center; padding-left: 4px; color: #333; }
.subtools svg { width: 15px; height: 15px; flex: none; }
.t1 { margin-left: 5px; width: 48px; }
.t2 { margin-left: 7px; width: 125px; }
.t3 { margin-left: 6px; }
.dimtext { color: #888; }
.tinycaret { width: 0; height: 0; border: 3px solid transparent; border-top: 3px solid #333; margin: 3px 0 0 3px; }

.status { height: 35px; flex: none; display: flex; align-items: center; padding-left: 3px; gap: 1px; }
.statbtn { width: 33px; height: 33px; background: #fff; border: 1px solid #b8b8b8; display: flex; align-items: center; justify-content: center; flex: none; }
.statbtn svg { width: 26px; height: 28px; }
.who { margin-left: 5px; width: 177px; flex: none; color: #333; }
.lic { width: 183px; flex: none; color: #333; }
.warn { font: bold 11.6px/14px "Liberation Sans", sans-serif; color: #f00000; white-space: nowrap; }
.statright { margin-left: auto; display: flex; gap: 1px; padding-right: 1px; }

.taskbar { height: 40px; flex: none; background: #05080f; display: flex; align-items: center; color: #fff; }
.taskbar svg { flex: none; }
.win { width: 16px; height: 16px; margin-left: 16px; }
.srch { width: 16px; height: 16px; margin-left: 32px; }
.tv { width: 16px; height: 16px; margin-left: 32px; }
.chrome { width: 24px; height: 24px; margin-left: 31px; }
.folder { width: 22px; height: 22px; margin-left: 25px; }
.excel { width: 21px; height: 24px; margin-left: 27px; }
.xtxt { font: bold 9px "Liberation Sans", sans-serif; fill: #fff; }
.tb-active { width: 48px; height: 40px; margin-left: 15px; background: #2a2a2c; border-bottom: 2px solid #76b9ed; display: flex; align-items: center; justify-content: center; }
.tb-active svg { width: 24px; height: 24px; }
.tray { margin-left: auto; display: flex; align-items: center; }
.t-up { width: 12px; height: 8px; margin-right: 10px; }
.t-net { width: 16px; height: 14px; margin-right: 8px; }
.t-snd { width: 16px; height: 14px; }
.clock { width: 56px; display: flex; flex-direction: column; align-items: center; font: 12px/17px "Noto Sans", sans-serif; white-space: nowrap; }
.t-note { width: 16px; height: 16px; margin: 0 24px 0 31px; }
```
